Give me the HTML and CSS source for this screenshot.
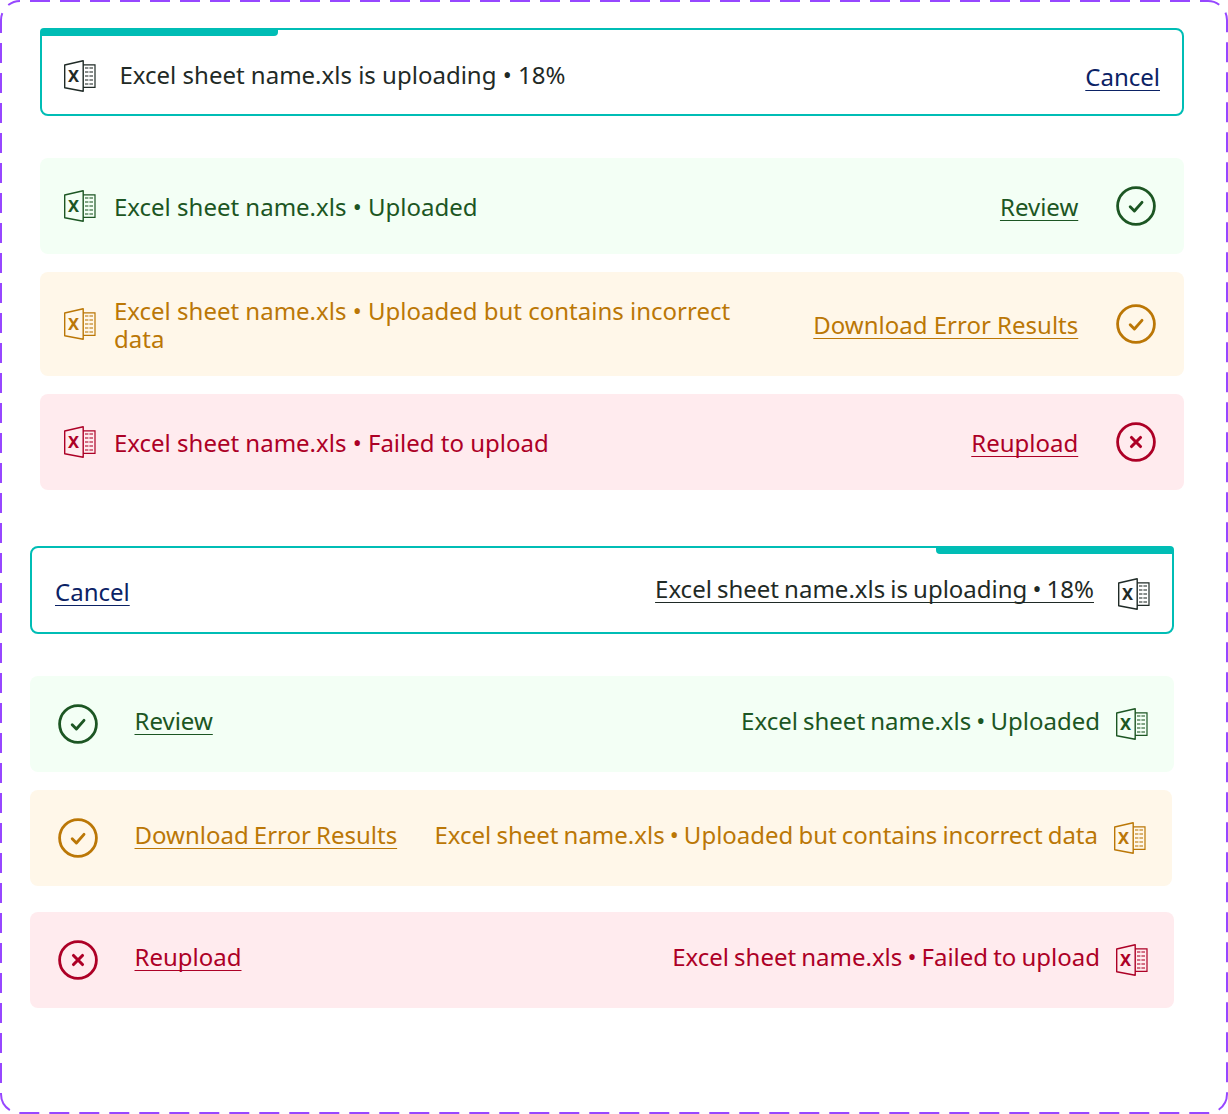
FILE: index.html
```html
<!DOCTYPE html>
<html lang="en">
<head>
    <meta charset="UTF-8">
    <meta name="viewport" content="width=device-width, initial-scale=1.0">
    <title>File Upload States</title>
    <link rel="stylesheet" href="styles.css">
</head>
<body>
    <!-- Shared icons -->
    <svg class="defs" width="0" height="0">
        <symbol id="excel" viewBox="0 0 32 32">
            <path d="M.7 5 19.2.8v30.4L.7 27.7z" fill="none" stroke="currentColor" stroke-width="1.4" stroke-linejoin="round"/>
            <text x="9.6" y="21.8" text-anchor="middle" class="excel-x" fill="currentColor">X</text>
            <path d="M19 4.8h12v22.6H19" fill="none" stroke="currentColor" stroke-width="1.2"/>
            <path d="M21 8h3.4M25.4 8H29M21 12h3.4M25.4 12H29M21 16h3.4M25.4 16H29M21 20h3.4M25.4 20H29M21 24h3.4M25.4 24H29" stroke="currentColor" stroke-width="1.7" opacity=".7"/>
        </symbol>
        <symbol id="check" viewBox="0 0 40 40">
            <circle cx="20" cy="20" r="18.4" fill="none" stroke="currentColor" stroke-width="2.8"/>
            <path d="m14.2 20.8 4.2 4.2 7.6-8.6" fill="none" stroke="currentColor" stroke-width="2.9" stroke-linecap="round" stroke-linejoin="round"/>
        </symbol>
        <symbol id="cross" viewBox="0 0 40 40">
            <circle cx="20" cy="20" r="18.4" fill="none" stroke="currentColor" stroke-width="2.8"/>
            <path d="m15.5 15.5 9 9m0-9-9 9" fill="none" stroke="currentColor" stroke-width="3.1" stroke-linecap="round"/>
        </symbol>
    </svg>

    <div class="frame">
        <svg class="frame-border" width="1228" height="1114">
            <rect x="1" y="1" width="1226" height="1112" rx="19" fill="none" stroke="#9747ff" stroke-width="2" stroke-dasharray="20 10" stroke-dashoffset="-10"/>
        </svg>

        <!-- Left to right -->
        <section class="group ltr">
            <div class="upload">
                <span class="progress"></span>
                <svg class="file-icon"><use href="#excel"/></svg>
                <span class="name name-wide">Excel sheet name.xls is uploading • 18%</span>
                <a class="cancel" href="#">Cancel</a>
            </div>

            <div class="status success first">
                <svg class="file-icon"><use href="#excel"/></svg>
                <span class="name">Excel sheet name.xls • Uploaded</span>
                <a href="#">Review</a>
                <svg class="state-icon"><use href="#check"/></svg>
            </div>
            <div class="status warning">
                <svg class="file-icon"><use href="#excel"/></svg>
                <span class="name">Excel sheet name.xls • Uploaded but contains incorrect data</span>
                <a href="#">Download Error Results</a>
                <svg class="state-icon"><use href="#check"/></svg>
            </div>
            <div class="status error">
                <svg class="file-icon"><use href="#excel"/></svg>
                <span class="name">Excel sheet name.xls • Failed to upload</span>
                <a href="#">Reupload</a>
                <svg class="state-icon"><use href="#cross"/></svg>
            </div>
        </section>

        <!-- Right to left -->
        <section class="group rtl">
            <div class="upload">
                <span class="progress"></span>
                <a class="cancel" href="#">Cancel</a>
                <span class="name name-link">Excel sheet name.xls is uploading • 18%</span>
                <svg class="file-icon"><use href="#excel"/></svg>
            </div>

            <div class="status success first">
                <svg class="state-icon"><use href="#check"/></svg>
                <a href="#">Review</a>
                <span class="name">Excel sheet name.xls • Uploaded</span>
                <svg class="file-icon"><use href="#excel"/></svg>
            </div>
            <div class="status warning narrow">
                <svg class="state-icon"><use href="#check"/></svg>
                <a href="#">Download Error Results</a>
                <span class="name">Excel sheet name.xls • Uploaded but contains incorrect data</span>
                <svg class="file-icon"><use href="#excel"/></svg>
            </div>
            <div class="status error spaced">
                <svg class="state-icon"><use href="#cross"/></svg>
                <a href="#">Reupload</a>
                <span class="name">Excel sheet name.xls • Failed to upload</span>
                <svg class="file-icon"><use href="#excel"/></svg>
            </div>
        </section>
    </div>
</body>
</html>
```

FILE: styles.css
```css
* {
    box-sizing: border-box;
}

body {
    margin: 0;
    background-color: #fff;
    font-family: "Noto Sans", "Open Sans", sans-serif;
    font-size: 24px;
    line-height: 28px;
    color: #1f2a26;
}

a {
    color: inherit;
    text-decoration: underline;
    text-decoration-thickness: 1px;
    text-underline-offset: 4px;
    text-decoration-skip-ink: none;
    white-space: nowrap;
}

.defs {
    display: none;
}

.excel-x {
    font-family: "Noto Sans", sans-serif;
    font-size: 16.5px;
    font-weight: 700;
}

.frame {
    position: relative;
    width: 1228px;
    height: 1114px;
    padding-top: 28px;
    overflow: hidden;
}

.frame-border {
    position: absolute;
    top: 0;
    left: 0;
    pointer-events: none;
}

.group {
    display: flex;
    flex-direction: column;
    width: 1144px;
}

.ltr {
    margin-left: 40px;
}

.rtl {
    margin-left: 30px;
    margin-top: 56px;
    word-spacing: -1.15px;
}

/* Uploading row */
.upload {
    position: relative;
    display: flex;
    align-items: center;
    height: 88px;
    padding: 8px 22px 0;
    border: 2px solid #00bdb5;
    border-radius: 8px;
}

.progress {
    position: absolute;
    top: -2px;
    left: -2px;
    width: 238px;
    height: 8px;
    background-color: #00bdb5;
    border-radius: 4px 0 4px 0;
}

.rtl .progress {
    left: auto;
    right: -2px;
    border-radius: 0 4px 0 4px;
}

.cancel {
    color: #0b2265;
    margin-top: 2px;
}

.rtl .upload {
    padding: 8px 22px 0 23px;
}

.rtl .upload .cancel {
    margin-right: auto;
    margin-top: -4px;
}

.rtl .upload .file-icon {
    margin-left: 24px;
}

.name-wide {
    flex: 1;
    margin-left: 23.5px;
    margin-top: -2px;
}

.name-link {
    margin-top: -10px;
    text-decoration: underline;
    text-decoration-thickness: 1px;
    text-underline-offset: 4px;
    text-decoration-skip-ink: none;
}

/* Status rows */
.status {
    display: flex;
    align-items: center;
    min-height: 96px;
    padding: 24px 28px 24px 24px;
    margin-top: 18px;
    border-radius: 8px;
}

.first {
    margin-top: 42px;
}

.file-icon {
    flex-shrink: 0;
    width: 32px;
    height: 32px;
}

.state-icon {
    flex-shrink: 0;
    width: 40px;
    height: 40px;
}

.ltr .status .name {
    flex: 1;
    margin: 2px 38px 0 18px;
}

.ltr .status a {
    margin-top: 2px;
}

.ltr .status .state-icon {
    margin-left: 37.75px;
}

/* two line text, keep the row at 104px */
.ltr .warning {
    padding-top: 23px;
    padding-bottom: 23px;
}

.rtl .status {
    padding: 24px 26px 24px 28px;
}

.rtl .status .state-icon {
    margin-right: 36.5px;
}

.rtl .status .name {
    margin: -6px 16px 0 auto;
}

.rtl .status a {
    margin-top: -6px;
}

.narrow {
    width: 1142px;
}

.spaced {
    margin-top: 26px;
}

.success {
    background-color: #f3fff5;
    color: #1c5623;
}

.warning {
    background-color: #fff7e9;
    color: #bb7706;
}

.error {
    background-color: #ffebee;
    color: #ad0026;
}
```
